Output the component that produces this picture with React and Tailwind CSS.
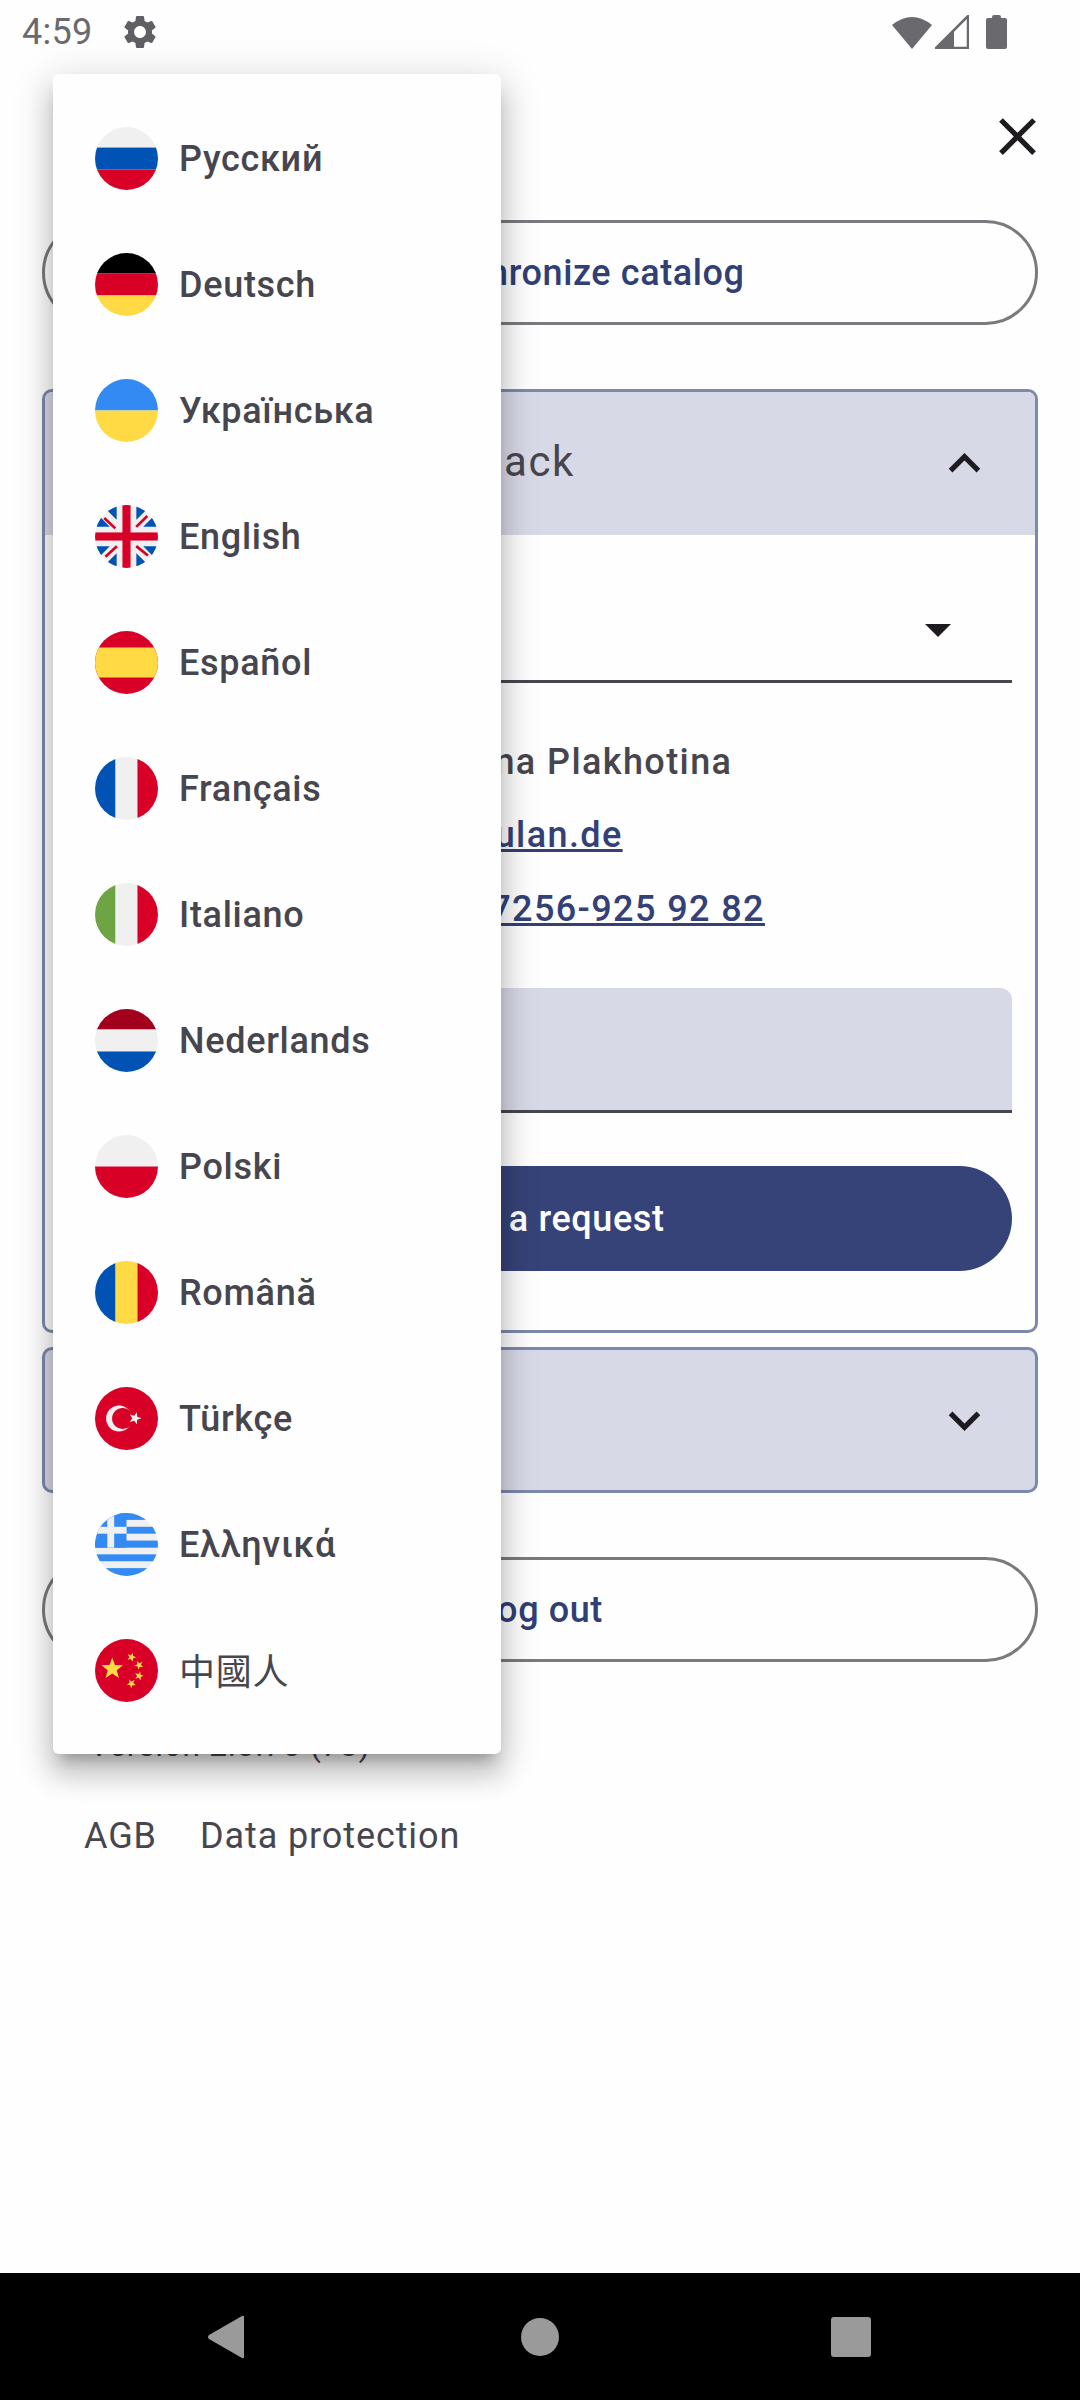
const Ci = ({ children }) => (
  <svg viewBox="0 0 512 512" className="w-[63px] h-[63px] shrink-0">
    <defs>
      <clipPath id="flagclip"><circle cx="256" cy="256" r="256" /></clipPath>
    </defs>
    <g clipPath="url(#flagclip)">{children}</g>
  </svg>
);

const W = "#f0f0f0", B = "#0052b4", R = "#d80027", Y = "#ffda44", K = "#000000", L = "#338af3";

const HS = ({ a, b, c }) => (
  <>
    <rect width="512" height="167" fill={a} />
    <rect y="167" width="512" height="178" fill={b} />
    <rect y="345" width="512" height="167" fill={c} />
  </>
);
const VS = ({ a, b, c }) => (
  <>
    <rect width="167" height="512" fill={a} />
    <rect x="167" width="178" height="512" fill={b} />
    <rect x="345" width="167" height="512" fill={c} />
  </>
);
const star = (cx, cy, r, rot = 0) => {
  const p = [];
  for (let i = 0; i < 10; i++) {
    const rr = i % 2 === 0 ? r : r * 0.42;
    const t = ((-90 + rot + i * 36) * Math.PI) / 180;
    p.push(`${cx + rr * Math.cos(t)},${cy + rr * Math.sin(t)}`);
  }
  return p.join(" ");
};

const flags = {
  ru: <HS a={W} b={B} c={R} />,
  de: <HS a={K} b={R} c={Y} />,
  ua: (
    <>
      <rect width="512" height="256" fill={L} />
      <rect y="256" width="512" height="256" fill={Y} />
    </>
  ),
  en: (
    <>
      <rect width="512" height="512" fill={W} />
      <path fill={B} d="M176 0 V120 L96 40 Q130 12 176 0 Z M336 0 V120 L416 40 Q382 12 336 0 Z M512 176 H392 L472 96 Q500 130 512 176 Z M0 176 H120 L40 96 Q12 130 0 176 Z M0 336 H120 L40 416 Q12 382 0 336 Z M512 336 H392 L472 416 Q500 382 512 336 Z M176 512 V392 L96 472 Q130 500 176 512 Z M336 512 V392 L416 472 Q382 500 336 512 Z" />
      <rect x="223" width="66" height="512" fill={R} />
      <rect y="223" width="512" height="66" fill={R} />
      <path stroke={R} strokeWidth="22" d="M75 105 L165 190 M425 90 L335 178 M85 420 L178 335 M430 410 L335 334" />
    </>
  ),
  es: (
    <>
      <rect width="512" height="512" fill={R} />
      <rect y="134" width="512" height="244" fill={Y} />
    </>
  ),
  fr: <VS a={B} b={W} c={R} />,
  it: <VS a="#6da544" b={W} c={R} />,
  nl: <HS a="#a2001d" b={W} c={B} />,
  pl: (
    <>
      <rect width="512" height="256" fill={W} />
      <rect y="256" width="512" height="256" fill={R} />
    </>
  ),
  ro: <VS a={B} b={Y} c={R} />,
  tr: (
    <>
      <rect width="512" height="512" fill={R} />
      <circle cx="195" cy="256" r="105" fill={W} />
      <circle cx="225" cy="256" r="86" fill={R} />
      <polygon points={star(325, 254, 52, 18)} fill={W} />
    </>
  ),
  gr: (
    <>
      <rect width="512" height="512" fill={W} />
      <rect width="512" height="56" fill={L} />
      <rect x="256" y="112" width="256" height="56" fill={L} />
      <rect y="224" width="512" height="58" fill={L} />
      <rect y="336" width="512" height="56" fill={L} />
      <rect y="448" width="512" height="64" fill={L} />
      <rect width="256" height="282" fill={L} />
      <rect x="100" width="56" height="282" fill={W} />
      <rect y="112" width="256" height="56" fill={W} />
    </>
  ),
  zh: (
    <>
      <rect width="512" height="512" fill={R} />
      <polygon points={star(140, 242, 92)} fill={Y} />
      <polygon points={star(296, 148, 38, 20)} fill={Y} />
      <polygon points={star(358, 212, 38, 45)} fill={Y} />
      <polygon points={star(358, 300, 38, 15)} fill={Y} />
      <polygon points={star(296, 362, 38, 40)} fill={Y} />
    </>
  ),
};

const langs = [
  ["ru", "Русский"],
  ["de", "Deutsch"],
  ["ua", "Українська"],
  ["en", "English"],
  ["es", "Español"],
  ["fr", "Français"],
  ["it", "Italiano"],
  ["nl", "Nederlands"],
  ["pl", "Polski"],
  ["ro", "Română"],
  ["tr", "Türkçe"],
  ["gr", "Ελληνικά"],
  ["zh", "中國人"],
];

const Chevron = ({ d }) => (
  <svg viewBox="0 0 24 24" className="w-[63px] h-[63px]" fill="#1d1b20">
    <path d={d} />
  </svg>
);

export default function App() {
  return (
    <div className="relative w-[1080px] h-[2400px] overflow-hidden bg-[#fefefe] flex flex-col text-[#47464f] font-['Roboto',sans-serif]">
      {/* status bar */}
      <div className="h-[63px] flex items-center pl-[22px] pr-[73px] text-[#6a696e]">
        <span className="text-[36px] leading-none tracking-[0.3px]">4:59</span>
        <svg viewBox="0 0 24 24" className="w-[40px] h-[40px] ml-[27px]" fill="#605f64">
          <path d="M19.14 12.94c.04-.3.06-.61.06-.94 0-.32-.02-.64-.07-.94l2.03-1.58a.49.49 0 0 0 .12-.61l-1.92-3.32a.488.488 0 0 0-.59-.22l-2.39.96c-.5-.38-1.03-.7-1.62-.94l-.36-2.54a.484.484 0 0 0-.48-.41h-3.84c-.24 0-.43.17-.47.41l-.36 2.54c-.59.24-1.13.57-1.62.94l-2.39-.96c-.22-.08-.47 0-.59.22L2.74 8.87c-.12.21-.08.47.12.61l2.03 1.58c-.05.3-.09.63-.09.94s.02.64.07.94l-2.03 1.58a.49.49 0 0 0-.12.61l1.92 3.32c.12.22.37.29.59.22l2.39-.96c.5.38 1.03.7 1.62.94l.36 2.54c.05.24.24.41.48.41h3.84c.24 0 .44-.17.47-.41l.36-2.54c.59-.24 1.13-.56 1.62-.94l2.39.96c.22.08.47 0 .59-.22l1.92-3.32c.12-.22.07-.47-.12-.61l-2.01-1.58zM12 15.6c-1.98 0-3.6-1.62-3.6-3.6s1.62-3.6 3.6-3.6 3.6 1.62 3.6 3.6-1.62 3.6-3.6 3.6z" />
        </svg>
        <div className="flex-1" />
        <svg viewBox="0 0 40 34" className="w-[40px] h-[34px]" fill="#6a696e">
          <path d="M0 10 Q20 -6 40 10 L20 34 Z" />
        </svg>
        <svg viewBox="0 0 34 34" className="w-[34px] h-[34px] ml-[3px]">
          <path d="M33 1 V33 H1 Z" fill="#fefefe" stroke="#6a696e" strokeWidth="2.5" />
          <path d="M19 15 V33 H1 Z" fill="#6a696e" />
        </svg>
        <svg viewBox="0 0 21 34" className="w-[21px] h-[34px] ml-[17px]" fill="#6a696e">
          <path d="M6 2 Q6 0 8 0 H13 Q15 0 15 2 V3 H19 Q21 3 21 5 V32 Q21 34 19 34 H2 Q0 34 0 32 V5 Q0 3 2 3 H6 Z" />
        </svg>
      </div>

      {/* page */}
      <div className="flex-1 flex flex-col px-[42px]">
        <div className="flex justify-end mt-[42px] -mr-[11px] h-[63px]">
          <svg viewBox="0 0 24 24" className="w-[63px] h-[63px]" fill="#1d1b20">
            <path d="M19 6.41L17.59 5 12 10.59 6.41 5 5 6.41 10.59 12 5 17.59 6.41 19 12 13.41 17.59 19 19 17.59 13.41 12z" />
          </svg>
        </div>

        <button className="mt-[52px] h-[105px] pl-[72px] rounded-full border-[3px] border-[#7a797e] flex items-center justify-center text-[36px] leading-none font-medium text-[#303f74] tracking-[0.6px]">
          Synchronize catalog
        </button>

        <div className="mt-[64px] h-[944px] rounded-[10px] border-[3px] border-[#7c89ad] overflow-hidden flex flex-col">
          <div className="h-[143px] bg-[#d8d9e6] flex items-center justify-between pr-[39px] shrink-0">
            <span className="ml-[337px] text-[42px] tracking-[1.5px] text-[#47464f] -mt-[5px]">Feedback</span>
            <Chevron d="M12 8l-6 6 1.41 1.41L12 10.83l4.59 4.58L18 14z" />
          </div>
          <div className="flex flex-col px-[23px]">
            <div className="h-[148px] border-b-[3px] border-[#47464f] flex items-end justify-end pr-[61px] pb-[43px]">
              <div className="w-0 h-0 border-l-[13px] border-r-[13px] border-t-[13px] border-l-transparent border-r-transparent border-t-[#1d1b20]" />
            </div>
            <div className="mt-[55px] h-[48px] leading-[48px] text-[36px] font-medium tracking-[1.4px] ml-[380px]">Alina Plakhotina</div>
            <div className="mt-[25px] h-[48px] leading-[48px] text-[36px] font-medium tracking-[1.4px] underline text-[#334176] ml-[325px]">info@ulan.de</div>
            <div className="mt-[26px] h-[48px] leading-[48px] text-[36px] font-medium tracking-[1.4px] underline text-[#334176] ml-[297px]">+49 (0)7256-925 92 82</div>
            <div className="mt-[55px] h-[125px] rounded-t-[12px] bg-[#d8d9e6] border-b-[3px] border-[#47464f]" />
            <button className="mt-[53px] h-[105px] rounded-full bg-[#364378] text-white text-[36px] leading-none font-medium tracking-[0.6px] flex items-center justify-center">
              Send a request
            </button>
          </div>
        </div>

        <div className="mt-[14px] h-[146px] rounded-[10px] border-[3px] border-[#7c89ad] bg-[#d8d9e6] flex items-center justify-end pr-[39px]">
          <Chevron d="M16.59 8.59L12 13.17 7.41 8.59 6 10l6 6 6-6z" />
        </div>

        <button className="mt-[64px] h-[105px] rounded-full border-[3px] border-[#7a797e] flex items-center justify-center text-[36px] leading-none font-medium text-[#303f74] tracking-[0.6px]">
          Log out
        </button>

        <div className="mt-[60px] ml-[47px] h-[48px] leading-[48px] text-[31.5px] tracking-[0.8px]">Version 2.0.70 (73)</div>
        <div className="mt-[42px] ml-[42px] flex gap-[43px] h-[48px] leading-[48px] text-[36px] tracking-[0.9px]">
          <span>AGB</span>
          <span>Data protection</span>
        </div>
      </div>

      {/* nav bar */}
      <div className="h-[127px] bg-black flex items-center justify-between pl-[207px] pr-[209px] shrink-0">
        <svg viewBox="0 0 37 44" className="w-[37px] h-[44px]" fill="#9a9a9a">
          <path d="M37 2 Q37 0 35 1 L2 20 Q0 22 2 24 L35 43 Q37 44 37 42 Z" />
        </svg>
        <div className="w-[38px] h-[38px] ml-[4px] rounded-full bg-[#9a9a9a]" />
        <div className="w-[40px] h-[40px] rounded-[3px] bg-[#9a9a9a]" />
      </div>

      {/* language menu */}
      <div className="absolute left-[53px] top-[74px] w-[448px] h-[1680px] bg-[#fefefe] rounded-[6px] shadow-[0_13px_13px_-8px_rgba(0,0,0,0.25),0_21px_26px_3px_rgba(0,0,0,0.14),0_8px_37px_7px_rgba(0,0,0,0.12)] pt-[21px] flex flex-col">
        {langs.map(([k, name]) => (
          <div key={k} className="h-[126px] shrink-0 flex items-center pl-[42px] gap-[21px]">
            <Ci>{flags[k]}</Ci>
            <span className={k === "zh"
              ? "text-[36px] font-normal tracking-[0.8px] leading-none mt-[6px] font-['Roboto','Noto_Sans_CJK_TC',sans-serif]"
              : "text-[36px] font-medium tracking-[0.7px] leading-none mt-[2px]"}>{name}</span>
          </div>
        ))}
      </div>
    </div>
  );
}
